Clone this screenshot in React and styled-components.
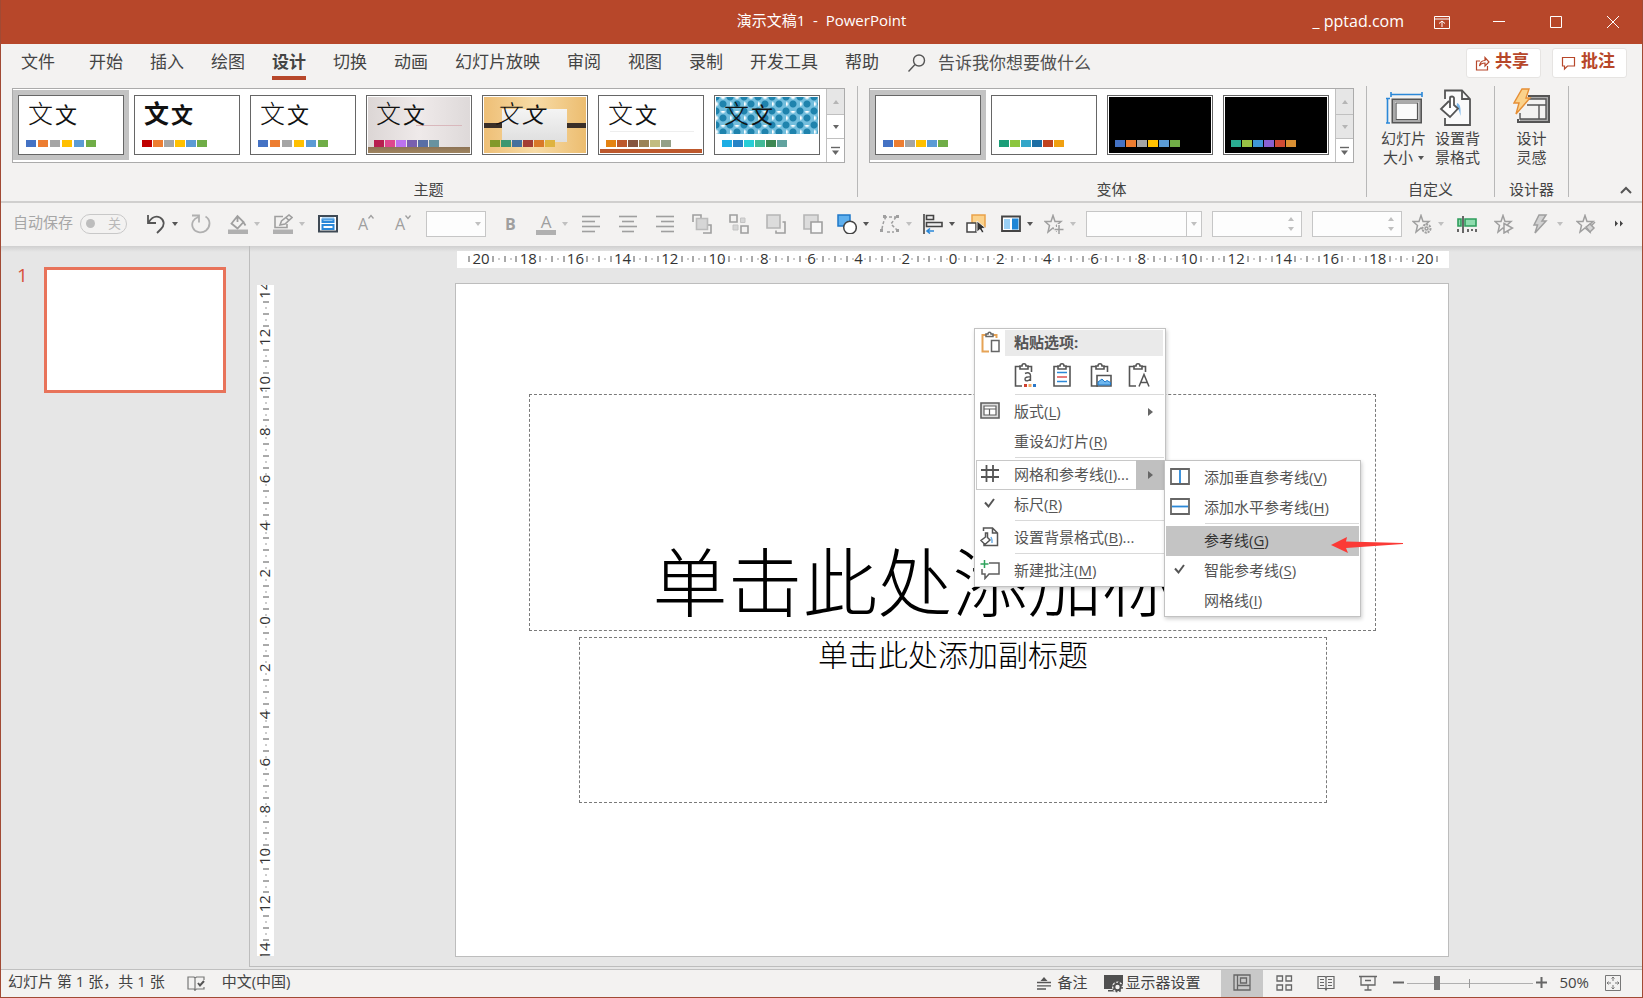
import React from "react";
import styled, { createGlobalStyle, css } from "styled-components";

const brand = "#b7472a";
const ink = "#444444";
const faded = "#b0b0b0";
const blue = "#2b88d8";

const GlobalStyle = createGlobalStyle`
  *, *::before, *::after { box-sizing: border-box; }
  body { margin: 0; background: #e6e6e6; }
  body, button, input, select { font-family: "Open Sans", "Noto Sans CJK SC", sans-serif; }
  button, input, select { margin: 0; padding: 0; border: 0; background: none; color: inherit; font-size: 15px; }
  svg { display: block; flex: none; }
`;

const Window = styled.div`
  display: flex;
  flex-direction: column;
  min-height: 100vh;
  border: solid #a14a34;
  border-width: 0 1px 1px;
  color: ${ink};
  font-size: 15px;
  line-height: 20px;
`;

/* ---------- title bar ---------- */

const TitleBar = styled.header`
  display: grid;
  grid-template-columns: 1fr auto 1fr;
  align-items: center;
  height: 44px;
  background: ${brand};
  color: #fff;
`;

const DocTitle = styled.h1`
  grid-column: 2;
  margin: 0;
  padding-bottom: 4px;
  font-size: 15px;
  font-weight: 400;
  white-space: pre;
`;

const WindowControls = styled.div`
  display: flex;
  justify-content: flex-end;
  align-items: center;
  padding-right: 1px;
`;

const Account = styled.span`
  padding: 0 9px 2px 0;
  font-size: 16px;
`;

const WindowButton = styled.button`
  display: grid;
  place-items: center;
  width: 57px;
  height: 44px;
`;

/* ---------- ribbon ---------- */

const TabRow = styled.nav`
  display: flex;
  align-items: flex-start;
  height: 42px;
  padding: 6px 15px 0 20px;
  background: #f3f2f1;
`;

const Tab = styled.button`
  height: 30px;
  margin-right: ${(p) => (p.$file ? 34 : 27)}px;
  padding-bottom: 2px;
  border-bottom: 4px solid ${(p) => (p.$active ? brand : "transparent")};
  font-size: 17px;
  line-height: 24px;
  font-weight: ${(p) => (p.$active ? 700 : 400)};
  white-space: nowrap;
`;

const TellMe = styled.label`
  display: flex;
  flex: 1;
  align-items: center;
  gap: 12px;
  height: 26px;
  margin-left: 2px;
`;

const TellMeInput = styled.input`
  flex: 1;
  min-width: 0;
  font-size: 17px;
  line-height: 24px;
  outline: none;
  &::placeholder { color: #505050; opacity: 1; }
`;

const ShareButton = styled.button`
  display: flex;
  align-items: center;
  gap: 5px;
  width: 75px;
  height: 30px;
  margin: -2px 0 0 11px;
  padding-left: 8px;
  border: 1px solid #e6e4e2;
  border-radius: 3px;
  background: #fff;
  color: ${brand};
  font-size: 17px;
  font-weight: 700;
  line-height: 24px;
  white-space: nowrap;
`;

const ShareLabel = styled.span`
  padding-bottom: 4px;
`;

const Ribbon = styled.div`
  display: flex;
  height: 117px;
  padding-bottom: 4px;
  border-bottom: 2px solid #d0cfce;
  background: #f3f2f1;
`;

const RibbonGroup = styled.section`
  display: flex;
  flex-direction: column;
  align-items: center;
  justify-content: space-between;
  padding: 2px ${(p) => p.$right}px 0 ${(p) => p.$left}px;
  border-right: 1px solid #b8b8b8;
`;

const GroupLabel = styled.span`
  line-height: 20px;
  margin-bottom: -2px;
`;

const Gallery = styled.div`
  display: flex;
  height: 75px;
  border: 1px solid #ababab;
  background: #fff;
`;

const GalleryItem = styled.button`
  display: grid;
  place-items: center;
  width: 116px;
  height: 70px;
  margin-top: 1px;
  background: ${(p) => (p.$selected ? "#c3c3c3" : "transparent")};
`;

const Thumb = styled.span`
  display: block;
  width: 106px;
  height: 60px;
  padding: 1px;
  border: 1px solid #666;
  background: #fff;
`;

const backdrops = {
  plain: css`background: #fff;`,
  black: css`background: #000;`,
  gallery: css`
    background: linear-gradient(#8d7355, #a08560) bottom / 100% 6px no-repeat,
      linear-gradient(#d9b8bc, #d9b8bc) 48px 28px / 46px 1px no-repeat,
      linear-gradient(90deg, #dcd6d5, #efeaea 50%, #ded9d9);
  `,
  paper: css`
    background: linear-gradient(#f4f4f4, #dfdfdf) 18px 12px / 65px 33px no-repeat,
      linear-gradient(#3a2f28, #3a2f28) 0 26px / 100% 5px no-repeat,
      linear-gradient(90deg, #eebf76, #f7dba6 50%, #ecbd70);
  `,
  retro: css`
    background: linear-gradient(#bd582c, #bd582c) bottom / 100% 4px no-repeat,
      linear-gradient(#eee, #eee) 10px 34px / 84px 1px no-repeat, #fff;
  `,
  tiles: css`
    background:
      linear-gradient(#fff, #fff) 0 37px / 100% 20px no-repeat,
      radial-gradient(circle, #1f83ad 3px, #1f83ad00 4px) 0 0 / 14px 14px,
      radial-gradient(circle, #1f83ad 3px, #1f83ad00 4px) 7px 7px / 14px 14px,
      radial-gradient(circle at 7px 0, #ffffff 1px, #ffffff00 3px) 0 0 / 14px 14px,
      radial-gradient(circle at 0 7px, #ffffff 1px, #ffffff00 3px) 0 0 / 14px 14px, #73bedd;
  `,
};

const ThumbArt = styled.span`
  display: flex;
  flex-direction: column;
  justify-content: space-between;
  height: 100%;
  padding: 0 0 6px 6px;
  ${(p) => backdrops[p.$kind]}
`;

const Sample = styled.span`
  display: flex;
  align-items: baseline;
  height: 32px;
  padding-left: ${(p) => (p.$slant ? 5 : 2)}px;
  gap: 2px;
  color: #111;
  font-family: "Noto Sans CJK SC", sans-serif;
  font-size: 25px;
  font-style: ${(p) => (p.$slant ? "italic" : "normal")};
  font-weight: ${(p) => (p.$heavy ? 700 : 300)};
  line-height: 30px;
`;

const SmallSample = styled.span`
  font-size: 22px;
  font-weight: ${(p) => (p.$heavy ? 700 : 400)};
`;

const Swatches = styled.span`
  display: flex;
  gap: ${(p) => (p.$wide ? 2 : 1)}px;
  margin-top: auto;
`;

const Swatch = styled.span`
  width: 10px;
  height: 7px;
  background: ${(p) => p.$color};
`;

const GalleryScroll = styled.div`
  display: grid;
  grid-template-rows: 26px 24px 1fr;
  width: 18px;
  margin-left: 1px;
  border-left: 1px solid #c0c0c0;
`;

const ScrollButton = styled.button`
  display: grid;
  place-items: center;
  border-bottom: 1px solid #c0c0c0;
  background: ${(p) => (p.disabled ? "#e6e6e6" : "#fff")};
  &:last-child { border-bottom: 0; }
`;

const LargeButtons = styled.div`
  display: flex;
  gap: 9px;
`;

const LargeButton = styled.button`
  display: flex;
  flex-direction: column;
  align-items: center;
  gap: 3px;
  line-height: 19px;
  white-space: nowrap;
`;

const ButtonLine = styled.span`
  display: flex;
  align-items: center;
  justify-content: center;
  gap: 5px;
`;

const CollapseButton = styled.button`
  align-self: flex-end;
  margin: 0 10px 0 auto;
`;

/* ---------- quick access toolbar ---------- */

const QuickBar = styled.div`
  display: flex;
  align-items: center;
  gap: 10px;
  height: 43px;
  padding: 0 0 2px 12px;
  background: #f3f2f1;
`;

const AutoSave = styled.label`
  display: flex;
  align-items: center;
  gap: 7px;
  margin-right: 9px;
  color: #a6a6a6;
  white-space: nowrap;
`;

const AutoSaveText = styled.span`
  padding-bottom: 3px;
`;

const Switch = styled.button`
  display: flex;
  align-items: center;
  justify-content: space-between;
  width: 47px;
  height: 20px;
  padding: 0 5px;
  border: 1px solid #c8c8c8;
  border-radius: 10px;
  color: #b8b8b8;
  font-size: 13px;
  line-height: 16px;
`;

const SwitchText = styled.span`
  padding-bottom: 2px;
`;

const Knob = styled.span`
  width: 9px;
  height: 9px;
  border-radius: 50%;
  background: #bdbdbd;
`;

const ToolGroup = styled.div`
  display: flex;
  align-items: center;
  gap: ${(p) => p.$gap || 13}px;
`;

const ToolButton = styled.button`
  display: flex;
  flex: none;
  align-items: center;
  gap: 6px;
  width: ${(p) => (p.$menu ? 32 : 24)}px;
  height: 26px;
`;

const Combo = styled.label`
  display: flex;
  flex: none;
  align-items: center;
  width: ${(p) => p.$w}px;
  height: 26px;
  border: 1px solid #c6c6c6;
  background: #fdfdfd;
`;

const ComboSelect = styled.select`
  flex: 1;
  min-width: 0;
  height: 24px;
  appearance: none;
`;

const ComboInput = styled.input`
  flex: 1;
  min-width: 0;
  height: 24px;
`;

const ComboArrow = styled.span`
  display: grid;
  place-items: center;
  align-content: ${(p) => (p.$spin ? "space-between" : "center")};
  width: ${(p) => (p.$spin ? 20 : 15)}px;
  height: 24px;
  padding: ${(p) => (p.$spin ? "5px 0" : 0)};
  border-left: ${(p) => (p.$divided ? "1px solid #c6c6c6" : 0)};
`;

/* ---------- workspace ---------- */

const Workspace = styled.div`
  display: flex;
  flex: 1;
  padding-bottom: 2px;
  background: linear-gradient(#cfcfcf, #e6e6e6 6px);
`;

const SlidePane = styled.aside`
  display: flex;
  align-items: flex-start;
  gap: 16px;
  width: 249px;
  padding: 21px 0 0 16px;
  border-right: 1px solid #bdbdbd;
`;

const SlideNumber = styled.span`
  width: 11px;
  color: #d8503a;
  font-size: 19px;
  line-height: 16px;
`;

const SlideThumb = styled.button`
  width: 182px;
  aspect-ratio: 182 / 126;
  border: 3px solid #e8735a;
  background: #fff;
`;

const Stage = styled.main`
  display: grid;
  flex: 1;
  grid-template-columns: 17px 1fr;
  grid-template-rows: 17px 1fr;
  gap: 15px 181px;
  padding: 5px 193px 9px 7px;
  border-bottom: 1px solid #bdbdbd;
`;

const HorizontalRuler = styled.div`
  grid-column: 2;
  margin-left: 2px;
  background: #fff;
`;

const VerticalRuler = styled.div`
  grid-row: 2;
  margin: 2px 0 1px;
  background: #fff;
  overflow: hidden;
  contain: size;
`;

const RulerSvg = styled.svg`
  overflow: visible;
`;

const RulerLabel = styled.text`
  fill: #333;
  font-size: 15px;
  text-anchor: middle;
`;

const Slide = styled.article`
  position: relative;
  display: grid;
  grid-template-rows: 110fr 237fr 6fr 166fr 153fr;
  border: 1px solid #bdbdbd;
  background: #fff;
`;

const Placeholder = styled.div`
  display: flex;
  justify-content: center;
  border: 1px dashed #7a7a7a;
  color: #000;
  font-family: "Noto Sans CJK SC", sans-serif;
  white-space: nowrap;
`;

const TitlePlaceholder = styled(Placeholder)`
  grid-row: 2;
  align-items: flex-end;
  margin: 0 72px 0 73px;
  padding-bottom: 5px;
  font-size: 75px;
  font-weight: 300;
  line-height: 92px;
`;

const SubtitlePlaceholder = styled(Placeholder)`
  grid-row: 4;
  align-items: flex-start;
  margin: 0 121px 0 123px;
  font-size: 30px;
  font-weight: 300;
  line-height: 30px;
`;

/* ---------- context menu ---------- */

const Menu = styled.div`
  position: absolute;
  left: ${(p) => p.$left};
  top: ${(p) => p.$top}px;
  width: ${(p) => p.$w}px;
  padding: ${(p) => (p.$sub ? 2 : 1)}px 1px 0;
  border: 1px solid #c2c2c2;
  background: #fff;
  box-shadow: 1px 2px 4px #0003;
  color: #555;
`;

const MenuHeader = styled.div`
  display: grid;
  grid-template-columns: 29px 1fr;
  align-items: center;
  height: 26px;
  padding-right: 1px;
`;

const MenuHeading = styled.span`
  padding: 0 0 2px 9px;
  background: #eaeaea;
  font-weight: 700;
  line-height: 24px;
`;

const PasteRow = styled.div`
  display: flex;
  align-items: center;
  gap: 16px;
  height: 38px;
  padding-left: 38px;
`;

const PasteButton = styled.button`
  width: 22px;
  height: 26px;
`;

const Divider = styled.hr`
  height: 1px;
  margin: 0 0 2px 39px;
  border: 0;
  background: #d9d9d9;
`;

const MenuItem = styled.button`
  display: grid;
  grid-template-columns: 38px 1fr auto;
  align-items: center;
  width: 100%;
  height: 30px;
  text-align: left;
  white-space: nowrap;
  ${(p) => p.$open && css`box-shadow: inset 0 0 0 1px #c8c8c8;`}
  ${(p) => p.$hot && css`background: #c4c4c4; color: #333;`}
`;

const MenuIcon = styled.span`
  padding: 0 0 2px 4px;
`;

const MenuLabel = styled.span`
  padding-bottom: 4px;
`;

const SubArrow = styled.span`
  display: grid;
  place-items: center;
  width: 28px;
  height: 30px;
  background: ${(p) => (p.$open ? "#c0c0c0" : "transparent")};
`;

const Key = styled.span`
  text-decoration: underline;
  text-underline-offset: 2px;
`;

const Pointer = styled.svg`
  position: absolute;
  left: 166px;
  top: 76px;
`;

/* ---------- status bar ---------- */

const StatusBar = styled.footer`
  display: flex;
  align-items: center;
  height: 28px;
  padding: 0 21px 0 7px;
  border-top: 1px solid #c0c0c0;
  background: #f3f2f1;
  line-height: 20px;
  white-space: nowrap;
`;

const StatusText = styled.span`
  margin-right: ${(p) => p.$after || 0}px;
  padding-bottom: 5px;
`;

const StatusButton = styled.button`
  display: flex;
  align-items: center;
  gap: ${(p) => p.$gap}px;
  height: 27px;
  margin-right: ${(p) => p.$after}px;
  padding-bottom: 1px;
`;

const StatusLabel = styled.span`
  padding-bottom: 4px;
`;

const Spacer = styled.span`
  flex: 1;
`;

const ViewButton = styled.button`
  display: grid;
  place-items: center;
  width: 42px;
  height: 27px;
  padding-bottom: 2px;
  background: ${(p) => (p.$active ? "#c8c8c8" : "transparent")};
`;

const ZoomGroup = styled.div`
  display: flex;
  align-items: center;
  gap: 3px;
  margin-left: 4px;
  padding-bottom: 2px;
`;

const ZoomSlider = styled.input`
  width: 126px;
  height: 16px;
  appearance: none;
  background: linear-gradient(#999, #999) 62px 4px / 1px 9px no-repeat,
    linear-gradient(#b0b0b0, #b0b0b0) 0 8px / 100% 1px no-repeat;
  &::-webkit-slider-thumb {
    appearance: none;
    width: 6px;
    height: 14px;
    background: #777;
  }
`;

const ZoomLevel = styled.button`
  margin: 0 16px 0 12px;
  padding-bottom: 3px;
`;

const FitButton = styled.button`
  padding-bottom: 2px;
`;

/* ---------- icons ---------- */

const Caret = ({ color = "#555", up, w = 6 }) => (
  <svg width={w} height="4" viewBox="0 0 6 4" aria-hidden="true">
    <path d={up ? "M0 4 3 0l3 4z" : "M0 0h6L3 4z"} fill={color} />
  </svg>
);

const Icon = ({ size = 20, h, stroke = "#9f9f9f", width = 1.4, children }) => (
  <svg width={size} height={h || size} viewBox={`0 0 ${size} ${h || size}`} fill="none" stroke={stroke} strokeWidth={width} aria-hidden="true">
    {children}
  </svg>
);

const starPath = "M9 1.500 11 7.500H17L12.500 11.500 14 18 9 14 4 18 5.500 11.500 1 7.500H7z";

const icons = {
  undo: (
    <Icon stroke="#555" width={1.8}>
      <path d="M2 1v8h8M2.500 8.500C6 3 10 1.500 14 3.500c5 3 4.500 8 1 11.500l-4 4" />
    </Icon>
  ),
  redo: (
    <Icon stroke={faded} width={1.8}>
      <path d="M1 1.500h7v7M7.500 3C2.500 4.500 0 9 1.800 13.500c2 5 9 6.500 13.200 3 5-4.500 4.500-11-.5-14" />
    </Icon>
  ),
  fill: (
    <Icon width={1.8}>
      <path d="M9.500 2 3.500 9.500l6 5 6-6.500zM9.500 2V8M15 7.500l2.500 4" />
      <path d="M0 15.500h20v5H0z" fill={faded} stroke="none" />
    </Icon>
  ),
  outline: (
    <Icon width={1.6}>
      <path d="M10 2.500H2v11h12V10M7 11l1.500-4L16 1l3 2.500-7 6.500zM13 3.500l3 3" />
      <path d="M0 15.500h20v5H0z" fill={faded} stroke="none" />
    </Icon>
  ),
  slide: (
    <Icon stroke="#3f4a55" width={2}>
      <path d="M1 2h18v15.500H1z" fill="#fff" />
      <path d="M4.500 5.500h11v2.500h-11zM4.500 11h11v4h-11z" fill="#fff" stroke={blue} />
      <path d="M4 4.500h12" stroke="#7db8ea" />
    </Icon>
  ),
  lines: (xs) => (
    <Icon stroke="#9f9f9f" width={1.6}>
      {xs.map(([a, b], i) => <path key={i} d={`M${a} ${2.5 + i * 5}H${b}`} />)}
    </Icon>
  ),
  bringFront: (
    <Icon width={1.6}>
      <path d="M1 8V1h8v3M11 19h8v-8h-3" />
      <path d="M4.500 4.500h11v11h-11z" fill="#d6d6d6" stroke="#bbb" />
    </Icon>
  ),
  group: (
    <Icon width={1.6}>
      <path d="M1 1h7v7H1zM12 12h7v7h-7z" />
      <path d="M11.500 4h4.500v4.500h-4.500zM4 11h5v5H4z" fill="#d6d6d6" stroke="#c4c4c4" strokeWidth="1" />
    </Icon>
  ),
  forward: (
    <Icon width={1.6}>
      <path d="M1 1h13v13H1z" fill="#dcdcdc" stroke="#b5b5b5" />
      <path d="M16.500 8H19v11h-9v-2.500" />
    </Icon>
  ),
  backward: (
    <Icon width={1.6}>
      <path d="M1 1h14v14H1z" fill="#dcdcdc" stroke="#b5b5b5" />
      <path d="M8 8h11v11H8z" fill="#f8f8f8" />
    </Icon>
  ),
  shapes: (
    <Icon stroke="#444" width={1.5}>
      <path d="M1 1h12v11H1z" fill="#5fb0ee" stroke="#1f78c8" />
      <circle cx="13" cy="13.500" r="6.300" fill="#fff" />
    </Icon>
  ),
  editPoints: (
    <Icon width={1.5}>
      <path d="M4 3h12M2 15c1-6 2-9 4-12M16 3l-5 7 6 6M7 18h7" strokeDasharray="3 2" />
      <path d="M3 1h3v3H3zM16 1h3v3h-3zM0 15h3v3H0zM16 15h3v3h-3z" fill="#9f9f9f" stroke="none" />
    </Icon>
  ),
  align: (
    <Icon stroke="#444" width={1.6}>
      <path d="M1 0v20M3.500 1.500h7v4h-7zM3.500 8.500h15.500v4H3.500z" fill="#eee" />
      <path d="M11 17H4M7 14.500 4 17l3 2.500" stroke={blue} />
    </Icon>
  ),
  selection: (
    <Icon stroke="#444" width={1.5}>
      <path d="M6 1h13v12H6z" fill="#fbd28b" stroke="#eaa24a" />
      <path d="M1 9h9v9H1z" fill="#fff" />
      <path d="M11 7v11l3-2.500L16 19l2-1-2-3.500 3.500-.5z" fill="#333" stroke="#fff" strokeWidth=".8" />
    </Icon>
  ),
  designer: (
    <Icon stroke="#444" width={1.8}>
      <path d="M1 2.500h18v14.500H1z" fill="#fff" />
      <path d="M3 5h6v10H3z" fill="#9ad0f5" stroke="none" />
      <path d="M11 4.500h6.500v11H11z" fill="#1f86d6" stroke="none" />
    </Icon>
  ),
  starAdd: (
    <Icon width={1.5}>
      <path d={starPath} />
      <path d="M15 10v10M10 15h10" stroke="#f3f2f1" strokeWidth="4" />
      <path d="M15 11v9M10.500 15.500h9" />
    </Icon>
  ),
  starGear: (
    <Icon width={1.5}>
      <path d={starPath} />
      <circle cx="14.500" cy="14.500" r="4" fill="#f3f2f1" strokeWidth="2" strokeDasharray="2 1" />
      <circle cx="14.500" cy="14.500" r="1.500" />
    </Icon>
  ),
  timeline: (
    <Icon stroke="#2f9d5c" width={1.6}>
      <path d="M1 5h3v7H1zM8 5h11v7H8z" fill="#8fdcae" />
      <path d="M6 2v17M1 15v3M11 15v3M15 15v2M19 15v3" stroke="#444" />
    </Icon>
  ),
  starPlay: (
    <Icon width={1.5}>
      <path d={starPath} />
      <path d="M10 9.500 18.500 14 10 19z" fill="#f3f2f1" />
    </Icon>
  ),
  bolt: (
    <Icon width={1.5}>
      <path d="M8 1h7l-4 6h4L4 19l2.500-8H3z" fill="#d2d2d2" />
    </Icon>
  ),
  starBrush: (
    <Icon width={1.5}>
      <path d={starPath} />
      <path d="M10 13l4-3 4 4-4 4zM16 11l3-3" fill="#d6d6d6" />
    </Icon>
  ),
  share: (
    <Icon size={15} stroke={brand} width={1.2}>
      <path d="M5 5H1.500v9h11v-4M4.500 10c.5-4 3-5.500 5.500-5.500V1.500L14 6l-4 4V7C7.500 7 5.500 8 4.500 10z" />
    </Icon>
  ),
  comment: (
    <Icon size={15} stroke={brand} width={1.2}>
      <path d="M1.500 1.500h12v8.500H6.500l-3 3v-3h-2z" />
    </Icon>
  ),
  slideSize: (
    <Icon size={38} stroke="#555" width={2}>
      <path d="M7.500 11.500h28.500v23H7.500z" fill="#fff" />
      <path d="M9 13h25.500v20H9z" stroke="#aaa" />
      <path d="M11 15h21.500v16.500H11z" fill="#fafafa" strokeWidth="1.200" />
      <path d="M6 6.500h31M6 4v5M37 4v5M2.500 10.500V35M1 10.500h4M1 35h4" stroke={blue} strokeWidth="1.600" />
    </Icon>
  ),
  background: (
    <Icon size={38} stroke="#555" width={1.8}>
      <path d="M6 11V2.500h17l8 8.500v26H6v-7" fill="#fafafa" />
      <path d="M23 2.500V11h8" />
      <path d="M18 15c3 1 4 4 3.500 13-1-4-1.500-7-4-9z" fill="#7db8ea" stroke="none" />
      <path d="M10 13 2 21l9 8 8-8.500-4-3.500V10c0-2-4-2-4 0v10" fill="#fff" />
    </Icon>
  ),
  ideas: (
    <Icon size={38} stroke="#555" width={2}>
      <path d="M5 31v3h31V8H15" />
      <path d="M17 10h17v22H7" stroke="#aaa" />
      <path d="M15 11h18v20H7v-6M14 17h19M26 17v14" strokeWidth="1.400" fill="none" />
      <path d="M9 1h7l-3 9h4L3 26l3-11H1z" fill="#fbd28b" stroke="#e68f35" strokeWidth="1.400" />
    </Icon>
  ),
  layout: (
    <Icon stroke="#5f5f5f" width={1.6}>
      <path d="M1 2h18v15H1z" fill="#ddd" />
      <path d="M4 5h12v9H4zM4 8h12M9.500 8v6" fill="#fff" strokeWidth="1.200" />
    </Icon>
  ),
  grid: (
    <Icon stroke="#555" width={1.8}>
      <path d="M6.500 1v17M13 1v17M1 6h18M1 13h18" />
    </Icon>
  ),
  check: (
    <Icon stroke="#555" width={2}>
      <path d="M5 8.500 8.500 12.500 14 5" />
    </Icon>
  ),
  pageFill: (
    <Icon stroke="#555" width={1.5}>
      <path d="M3.500 4V1h9l5 5v12.500H4V17M12.500 1v5h5" />
      <path d="M5.500 6v4L1 13.500 5 17.500 10 13 7.500 10.500V6z" fill="#fff" />
      <path d="M11 10c1 2 1.300 4 1 6" stroke="#6db0e8" />
    </Icon>
  ),
  newComment: (
    <Icon stroke="#5f5f5f" width={1.5}>
      <path d="M9 3h10v11H9l-4 4.500V14H2V9" />
      <path d="M4.500 0v8M.5 4h8" stroke="#2fa35c" />
    </Icon>
  ),
  guideV: (
    <Icon stroke="#666" width={1.8}>
      <path d="M1 2h18v15H1z" />
      <path d="M10 3v13" stroke={blue} />
    </Icon>
  ),
  guideH: (
    <Icon stroke="#666" width={1.8}>
      <path d="M1 2h18v15H1z" />
      <path d="M2 9.500h16" stroke={blue} />
    </Icon>
  ),
  paste: (
    <Icon size={20} h={22} stroke="#666" width={1.5}>
      <path d="M6 4H2.500v16.500H9M13 4h3.500v3" stroke="#e6a356" strokeWidth="2" />
      <path d="M6 5.500V3h2c0-2.500 3-2.500 3 0h2v2.500z" fill="#fff" />
      <path d="M11.500 9.500H19v11h-7.500z" fill="#fff" />
    </Icon>
  ),
};

const Clip = ({ children, open = true }) => (
  <Icon size={22} h={26} stroke="#555" width={1.6}>
    <path d={open ? "M6 4.500H1.500V24H8M14 4.500h3.500V10" : "M6 4.500H2V24h16V4.500h-4"} />
    <path d="M6 7V4h2c0-3 4-3 4 0h2v3z" fill="#fff" />
    {children}
  </Icon>
);

/* ---------- data ---------- */

const tabs = ["文件", "开始", "插入", "绘图", "设计", "切换", "动画", "幻灯片放映", "审阅", "视图", "录制", "开发工具", "帮助"];

const office = ["#4472c4", "#ed7d31", "#a5a5a5", "#ffc000", "#5b9bd5", "#70ad47"];

const themes = [
  { name: "Office", colors: office, wide: true, selected: true },
  { name: "粗体", colors: ["#c00000", ...office.slice(1)], heavy: true },
  { name: "简洁", colors: office, wide: true },
  { name: "画廊", kind: "gallery", colors: ["#b71e4f", "#de478e", "#bc72f0", "#795faf", "#586ea6", "#6892a0"] },
  { name: "纸张", kind: "paper", colors: ["#83992a", "#3c9770", "#44709d", "#a23c33", "#d97828", "#deb340"], slant: true },
  { name: "回顾", kind: "retro", colors: ["#e48312", "#bd582c", "#865640", "#9b8357", "#c2bc80", "#94a088"] },
  { name: "积分", kind: "tiles", colors: ["#1cade4", "#2683c6", "#27ced7", "#42ba97", "#3e8853", "#62a39f"] },
];

const variants = [
  { name: "变体 1", colors: office, selected: true },
  { name: "变体 2", colors: ["#1b9e78", "#8cc63f", "#33a6c9", "#1c6ea4", "#c0431f", "#f0a010"] },
  { name: "变体 3", kind: "black", colors: office },
  { name: "变体 4", kind: "black", colors: ["#2bae93", "#99c245", "#3f97d6", "#8860d0", "#cf4a33", "#d98f33"] },
];

const disabledCaret = "#c0c0c0";

/* ---------- composed parts ---------- */

function GalleryView({ items, sample, downDisabled }) {
  return (
    <Gallery>
      {items.map((t) => (
        <GalleryItem key={t.name} $selected={t.selected} aria-label={t.name}>
          <Thumb>
            <ThumbArt $kind={t.kind || "plain"}>
              {sample && (
                <Sample $heavy={t.heavy} $slant={t.slant}>
                  文<SmallSample $heavy={t.heavy}>文</SmallSample>
                </Sample>
              )}
              <Swatches $wide={t.wide}>
                {t.colors.map((c) => <Swatch key={c} $color={c} />)}
              </Swatches>
            </ThumbArt>
          </Thumb>
        </GalleryItem>
      ))}
      <GalleryScroll>
        <ScrollButton disabled aria-label="向上"><Caret up color="#b5b5b5" /></ScrollButton>
        <ScrollButton disabled={downDisabled} aria-label="向下"><Caret color={downDisabled ? "#b5b5b5" : "#666"} /></ScrollButton>
        <ScrollButton aria-label="其他">
          <Icon size={9} stroke="#666" width={1.4}><path d="M0 1.500h9" /><path d="M1 4.500h7L4.500 9z" fill="#666" stroke="none" /></Icon>
        </ScrollButton>
      </GalleryScroll>
    </Gallery>
  );
}

function Tool({ label, icon, menu, off }) {
  return (
    <ToolButton $menu={menu} aria-label={label}>
      {icon}
      {menu && <Caret color={off ? disabledCaret : "#555"} />}
    </ToolButton>
  );
}

const LetterIcon = styled.span`
  display: flex;
  width: 20px;
  padding-left: ${(p) => (p.$pad ? 6 : 3)}px;
  color: #9f9f9f;
  font-size: 16px;
  font-weight: ${(p) => (p.$bold ? 700 : 400)};
  line-height: 20px;
`;

const ColorLetter = styled.span`
  width: 20px;
  border-bottom: 5px solid ${faded};
  color: #9f9f9f;
  font-size: 17px;
  line-height: 17px;
  text-align: center;
`;

const Mark = ({ down }) => (
  <Icon size={6} stroke="#9f9f9f" width={1.3}>
    <path d={down ? "M.5 1.500 3 4.500 5.500 1.500" : "M.5 4.500 3 1.500 5.500 4.500"} />
  </Icon>
);

function Spin({ label }) {
  return (
    <Combo $w={90}>
      <ComboInput type="text" aria-label={label} />
      <ComboArrow $spin><Caret up color={disabledCaret} /><Caret color={disabledCaret} /></ComboArrow>
    </Combo>
  );
}

function RulerMarks({ vertical, max }) {
  const unit = 23.6;
  const marks = [];
  for (let q = -max * 4 - 2; q <= max * 4 + 2; q++) {
    const pos = (q * unit) / 4;
    const near = ((q % 8) + 8) % 8;
    if (near === 0) {
      const n = Math.abs(q / 4);
      marks.push(
        vertical
          ? <RulerLabel key={q} transform={`translate(13 ${pos}) rotate(-90)`}>{n}</RulerLabel>
          : <RulerLabel key={q} x={pos} y="13">{n}</RulerLabel>
      );
      continue;
    }
    const wide = Math.abs(q) >= 40;
    if (wide && (near === 1 || near === 7)) continue;
    const half = q % 2 === 0 ? 3 : 1;
    marks.push(
      <path
        key={q}
        d={vertical ? `M${9 - half} ${Math.round(pos) + 0.5}h${half * 2}` : `M${Math.round(pos)} ${8 - half}v${half * 2}`}
        stroke={half === 3 ? "#555" : "#999"}
      />
    );
  }
  return <>{marks}</>;
}

const Item = ({ icon, text, k, tail = "", children, ...state }) => (
  <MenuItem role="menuitem" {...state}>
    <MenuIcon>{icon}</MenuIcon>
    <MenuLabel>{text}(<Key>{k}</Key>){tail}</MenuLabel>
    {children}
  </MenuItem>
);

const RightArrow = () => (
  <svg width="5" height="8" viewBox="0 0 5 8" aria-hidden="true"><path d="M0 0 5 4 0 8z" fill="#666" /></svg>
);

function ContextMenu() {
  return (
    <Menu role="menu" $left="calc(50% + 22px)" $top={44} $w={192}>
      <MenuHeader>
        <MenuIcon>{icons.paste}</MenuIcon>
        <MenuHeading>粘贴选项:</MenuHeading>
      </MenuHeader>
      <PasteRow>
        <PasteButton aria-label="使用目标主题">
          <Clip>
            <path d="M11 11.500c3-1.500 5.500-.5 5.500 2V19M16.500 15c-3-.5-6 .3-5.500 2.500s4.500 1.500 5.500-1" strokeWidth="1.400" />
            <path d="M10 22h3v3h-3z" fill="#d04030" stroke="none" />
            <path d="M14.500 22h3v3h-3z" fill="#f0a860" stroke="none" />
            <path d="M19 22h3v3h-3z" fill="#2b78c8" stroke="none" />
          </Clip>
        </PasteButton>
        <PasteButton aria-label="保留源格式">
          <Clip open={false}>
            <path d="M5 10.500h10M5 19.500h10" stroke={blue} />
            <path d="M5 15h10" stroke="#e05a5a" />
          </Clip>
        </PasteButton>
        <PasteButton aria-label="图片">
          <Clip>
            <path d="M7 13.500h14V24H7z" fill="#fff" />
            <path d="M8 20l4-3 3 3 2-1.500 3.500 2V23H8z" fill="#6db6ee" stroke="#1f78c8" strokeWidth="1" />
          </Clip>
        </PasteButton>
        <PasteButton aria-label="只保留文本">
          <Clip>
            <path d="M11 24.500 16 12.500 21 24.500M13 20.500h6" strokeWidth="1.500" />
          </Clip>
        </PasteButton>
      </PasteRow>
      <Divider />
      <Item icon={icons.layout} text="版式" k="L"><SubArrow><RightArrow /></SubArrow></Item>
      <Item text="重设幻灯片" k="R" />
      <Divider />
      <Item icon={icons.grid} text="网格和参考线" k="I" tail="..." $open><SubArrow $open><RightArrow /></SubArrow></Item>
      <Item icon={icons.check} text="标尺" k="R" />
      <Divider />
      <Item icon={icons.pageFill} text="设置背景格式" k="B" tail="..." />
      <Divider />
      <Item icon={icons.newComment} text="新建批注" k="M" />
      <Menu role="menu" $sub $left="189px" $top={131} $w={197}>
        <Item icon={icons.guideV} text="添加垂直参考线" k="V" />
        <Item icon={icons.guideH} text="添加水平参考线" k="H" />
        <Divider />
        <Item text="参考线" k="G" $hot />
        <Item icon={icons.check} text="智能参考线" k="S" />
        <Item text="网格线" k="I" />
        <Pointer width="72" height="16" viewBox="0 0 72 16" aria-hidden="true">
          <path d="M0 8 16 0 15 4.500 72 6v1L15 11l2 5z" fill="#fb3a36" />
        </Pointer>
      </Menu>
    </Menu>
  );
}

export default function App() {
  return (
    <>
      <GlobalStyle />
      <Window>
        <TitleBar>
          <DocTitle>{"演示文稿1  -  PowerPoint"}</DocTitle>
          <WindowControls>
            <Account>_ pptad.com</Account>
            <WindowButton aria-label="功能区显示选项">
              <Icon size={16} h={14} stroke="#fff" width={1}><path d="M.5 1.500h15v12H.5zM.5 4h15M8 12V6M5 8.500 8 6l3 2.500" /></Icon>
            </WindowButton>
            <WindowButton aria-label="最小化"><Icon size={12} stroke="#fff" width={1}><path d="M0 5.500h12" /></Icon></WindowButton>
            <WindowButton aria-label="最大化"><Icon size={12} stroke="#fff" width={1}><path d="M.5.5h11v11H.5z" /></Icon></WindowButton>
            <WindowButton aria-label="关闭"><Icon size={12} stroke="#fff" width={1}><path d="M0 0 12 12M12 0 0 12" /></Icon></WindowButton>
          </WindowControls>
        </TitleBar>

        <TabRow>
          {tabs.map((t, i) => <Tab key={t} $file={i === 0} $active={t === "设计"}>{t}</Tab>)}
          <TellMe>
            <Icon size={18} stroke="#555" width={1.4}><circle cx="11" cy="6.500" r="5.500" /><path d="M7 10.500.5 17.500" /></Icon>
            <TellMeInput type="text" placeholder="告诉我你想要做什么" aria-label="告诉我你想要做什么" />
          </TellMe>
          <ShareButton>{icons.share}<ShareLabel>共享</ShareLabel></ShareButton>
          <ShareButton>{icons.comment}<ShareLabel>批注</ShareLabel></ShareButton>
        </TabRow>

        <Ribbon>
          <RibbonGroup $left={11} $right={12}>
            <GalleryView items={themes} sample />
            <GroupLabel>主题</GroupLabel>
          </RibbonGroup>
          <RibbonGroup $left={11} $right={12}>
            <GalleryView items={variants} downDisabled />
            <GroupLabel>变体</GroupLabel>
          </RibbonGroup>
          <RibbonGroup $left={14} $right={14}>
            <LargeButtons>
              <LargeButton>
                {icons.slideSize}
                <span>幻灯片<ButtonLine>大小<Caret /></ButtonLine></span>
              </LargeButton>
              <LargeButton>
                {icons.background}
                <span>设置背<br />景格式</span>
              </LargeButton>
            </LargeButtons>
            <GroupLabel>自定义</GroupLabel>
          </RibbonGroup>
          <RibbonGroup $left={14} $right={14}>
            <LargeButton>
              {icons.ideas}
              <span>设计<br />灵感</span>
            </LargeButton>
            <GroupLabel>设计器</GroupLabel>
          </RibbonGroup>
          <CollapseButton aria-label="折叠功能区">
            <Icon size={12} stroke="#555" width={2}><path d="M1 8 6 3l5 5" /></Icon>
          </CollapseButton>
        </Ribbon>

        <QuickBar>
          <AutoSave>
            <AutoSaveText>自动保存</AutoSaveText>
            <Switch role="switch" aria-checked="false"><Knob /><SwitchText>关</SwitchText></Switch>
          </AutoSave>
          <ToolGroup>
            <Tool label="撤消" icon={icons.undo} menu />
            <Tool label="重做" icon={icons.redo} />
            <Tool label="形状填充" icon={icons.fill} menu off />
            <Tool label="形状轮廓" icon={icons.outline} menu off />
            <Tool label="幻灯片" icon={icons.slide} />
            <Tool label="增大字号" icon={<LetterIcon>A<Mark /></LetterIcon>} />
            <Tool label="减小字号" icon={<LetterIcon>A<Mark down /></LetterIcon>} />
          </ToolGroup>
          <ToolGroup>
            <Combo $w={60}>
              <ComboSelect aria-label="字号" />
              <ComboArrow><Caret color={disabledCaret} /></ComboArrow>
            </Combo>
            <Tool label="加粗" icon={<LetterIcon $bold $pad>B</LetterIcon>} />
            <Tool label="字体颜色" icon={<ColorLetter>A</ColorLetter>} menu off />
            <Tool label="左对齐" icon={icons.lines([[1, 19], [1, 14], [1, 19], [1, 14]])} />
            <Tool label="居中" icon={icons.lines([[1, 19], [4, 16], [1, 19], [4, 16]])} />
            <Tool label="右对齐" icon={icons.lines([[1, 19], [6, 19], [1, 19], [6, 19]])} />
            <Tool label="置于顶层" icon={icons.bringFront} />
            <Tool label="组合" icon={icons.group} />
            <Tool label="上移一层" icon={icons.forward} />
            <Tool label="下移一层" icon={icons.backward} />
          </ToolGroup>
          <ToolGroup $gap={11}>
            <Tool label="形状" icon={icons.shapes} menu />
            <Tool label="编辑形状" icon={icons.editPoints} menu off />
            <Tool label="对齐" icon={icons.align} menu />
            <Tool label="选择窗格" icon={icons.selection} />
            <Tool label="版式" icon={icons.designer} menu />
            <Tool label="添加动画" icon={icons.starAdd} menu off />
          </ToolGroup>
          <Combo $w={116}>
            <ComboSelect aria-label="开始" />
            <ComboArrow $divided><Caret color={disabledCaret} /></ComboArrow>
          </Combo>
          <Spin label="持续时间" />
          <Spin label="延迟" />
          <ToolGroup>
            <Tool label="动画效果" icon={icons.starGear} menu off />
            <Tool label="动画窗格" icon={icons.timeline} />
            <Tool label="预览" icon={icons.starPlay} />
            <Tool label="触发" icon={icons.bolt} menu off />
            <Tool label="动画刷" icon={icons.starBrush} />
            <Tool
              label="更多"
              icon={<Icon size={12} stroke="none"><path d="M2 2.500 5 5.500 2 8.500zM7 2.500l3 3-3 3z" fill="#444" /></Icon>}
            />
          </ToolGroup>
        </QuickBar>

        <Workspace>
          <SlidePane>
            <SlideNumber>1</SlideNumber>
            <SlideThumb aria-label="幻灯片 1" />
          </SlidePane>
          <Stage>
            <HorizontalRuler>
              <RulerSvg width="100%" height="17"><svg x="50%" overflow="visible"><RulerMarks max={20} /></svg></RulerSvg>
            </HorizontalRuler>
            <VerticalRuler>
              <RulerSvg width="17" height="100%"><svg y="50%" overflow="visible"><RulerMarks vertical max={14} /></svg></RulerSvg>
            </VerticalRuler>
            <Slide>
              <TitlePlaceholder>单击此处添加标题</TitlePlaceholder>
              <SubtitlePlaceholder>单击此处添加副标题</SubtitlePlaceholder>
              <ContextMenu />
            </Slide>
          </Stage>
        </Workspace>

        <StatusBar>
          <StatusText $after={22}>幻灯片 第 1 张，共 1 张</StatusText>
          <StatusButton $gap={0} $after={17} aria-label="拼写检查">
            <Icon size={18} h={16} stroke="#777" width={1.2}>
              <path d="M8 3 7 2H1v12h6l1 1.500V3l1.500-1H17v3M8 15l1.500-1H17v-2" />
              <path d="M11 8l2 2.500L17 6" stroke="#555" strokeWidth="2" />
            </Icon>
          </StatusButton>
          <StatusText>中文(中国)</StatusText>
          <Spacer />
          <StatusButton $gap={6} $after={17}>
            <Icon size={14} stroke="#555" width={1.3}><path d="M3.500 5 7 1l3.500 4z" fill="#555" stroke="none" /><path d="M0 6.500h14M0 9.800h14M0 13h9" /></Icon>
            <StatusLabel>备注</StatusLabel>
          </StatusButton>
          <StatusButton $gap={1} $after={21}>
            <Icon size={20} stroke="none">
              <path d="M0 2h19v10H10v4H0z" fill="#505050" />
              <path d="M4 17h7v1.500H4z" fill="#505050" />
              <circle cx="13.500" cy="14" r="5.500" fill="#f3f2f1" />
              <circle cx="13.500" cy="14" r="3.200" stroke="#505050" strokeWidth="2" />
              <circle cx="13.500" cy="14" r="4.600" stroke="#505050" strokeWidth="1.600" strokeDasharray="1.800 1.810" />
            </Icon>
            <StatusLabel>显示器设置</StatusLabel>
          </StatusButton>
          <ViewButton $active aria-label="普通视图">
            <Icon size={18} h={17} stroke="#666" width={1.3}><path d="M1 1h16v15H1zM4.500 1v15M7.500 4h6v5h-6zM4.500 11.500H17" /></Icon>
          </ViewButton>
          <ViewButton aria-label="幻灯片浏览">
            <Icon size={17} h={16} stroke="#666" width={1.3}><path d="M1 1h5.500v5H1zM10 1h5.500v5H10zM1 10h5.500v5H1zM10 10h5.500v5H10z" /></Icon>
          </ViewButton>
          <ViewButton aria-label="阅读视图">
            <Icon size={18} h={16} stroke="#666" width={1.2}><path d="M9 2.500 8 1.500H1v12h7l1 1.500 1-1.500h7v-12h-7zV15M3 4.500h4M3 7.500h4M3 10.500h4M11 4.500h4M11 7.500h4M11 10.500h4" /></Icon>
          </ViewButton>
          <ViewButton aria-label="幻灯片放映">
            <Icon size={18} h={16} stroke="#666" width={1.3}><path d="M0 1.500h18M2 1.500v8.500h14V1.500M9 10v5M5.500 15h7M6 5.500h6" /></Icon>
          </ViewButton>
          <ZoomGroup>
            <button aria-label="缩小"><Icon size={11} stroke="#666" width={2}><path d="M0 5.500h11" /></Icon></button>
            <ZoomSlider type="range" min="10" max="190" defaultValue="50" aria-label="缩放" />
            <button aria-label="放大"><Icon size={11} stroke="#666" width={2}><path d="M0 5.500h11M5.500 0v11" /></Icon></button>
          </ZoomGroup>
          <ZoomLevel>50%</ZoomLevel>
          <FitButton aria-label="适应窗口">
            <Icon size={16} stroke="#777" width={1}><path d="M.5.5h15v15H.5zM8 2v4M6.500 3.500 8 2l1.500 1.500M8 14v-4M6.500 12.500 8 14l1.500-1.500M2 8h4M3.500 6.500 2 8l1.500 1.500M14 8h-4M12.500 6.500 14 8l-1.500 1.500" /></Icon>
          </FitButton>
        </StatusBar>
      </Window>
    </>
  );
}
